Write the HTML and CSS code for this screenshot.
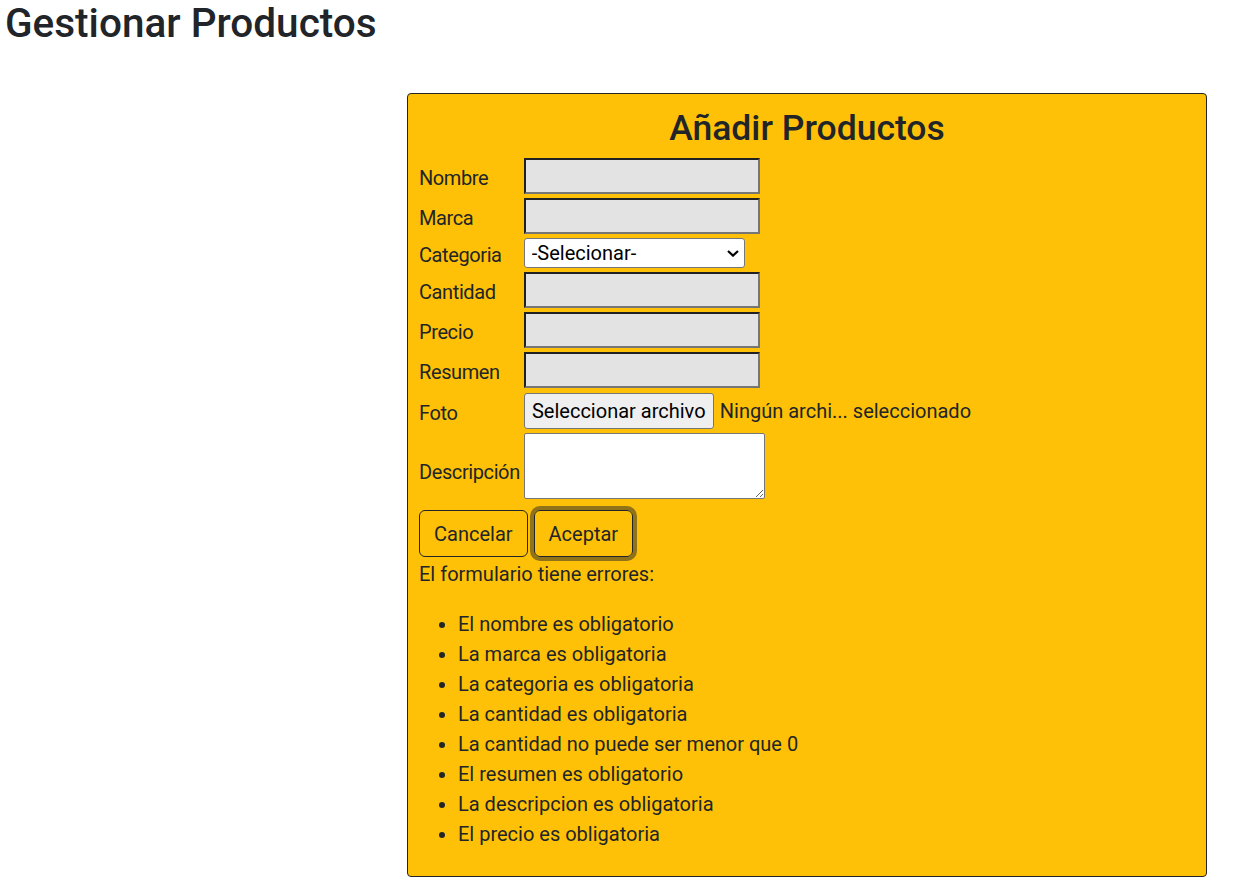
FILE: index.html
```html
<!DOCTYPE html>
<html lang="es">
<head>
<meta charset="utf-8">
<title>Gestionar Productos</title>
<link rel="stylesheet" href="styles.css">
</head>
<body>
<h1 class="page-title">Gestionar Productos</h1>
<div class="card">
  <h2 class="card-title">Añadir Productos</h2>
  <table class="form-table">
    <tr>
      <td class="lbl"><label for="nombre">Nombre</label></td>
      <td><input class="field" id="nombre" type="text"></td>
    </tr>
    <tr>
      <td class="lbl"><label for="marca">Marca</label></td>
      <td><input class="field" id="marca" type="text"></td>
    </tr>
    <tr>
      <td class="lbl"><label for="categoria">Categoria</label></td>
      <td>
        <span class="select-wrap">
          <select class="select" id="categoria">
            <option>-Selecionar-</option>
          </select>
          <svg class="chevron" width="12" height="7" viewBox="0 0 12 7" aria-hidden="true"><path d="M1 1l5 4.6L11 1" fill="none" stroke="#000" stroke-width="2.2"/></svg>
        </span>
      </td>
    </tr>
    <tr>
      <td class="lbl"><label for="cantidad">Cantidad</label></td>
      <td><input class="field" id="cantidad" type="text"></td>
    </tr>
    <tr>
      <td class="lbl"><label for="precio">Precio</label></td>
      <td><input class="field" id="precio" type="text"></td>
    </tr>
    <tr>
      <td class="lbl"><label for="resumen">Resumen</label></td>
      <td><input class="field" id="resumen" type="text"></td>
    </tr>
    <tr>
      <td class="lbl"><label>Foto</label></td>
      <td>
        <div class="file-input">
          <button type="button" class="file-btn">Seleccionar archivo</button>
          <span class="file-name">Ningún archi... seleccionado</span>
        </div>
      </td>
    </tr>
    <tr>
      <td class="lbl"><label for="descripcion">Descripción</label></td>
      <td><textarea class="textarea" id="descripcion"></textarea></td>
    </tr>
  </table>
  <div class="actions">
    <button type="button" class="btn">Cancelar</button>
    <button type="button" class="btn btn-focus">Aceptar</button>
  </div>
  <p class="errors-title">El formulario tiene errores:</p>
  <ul class="errors">
    <li>El nombre es obligatorio</li>
    <li>La marca es obligatoria</li>
    <li>La categoria es obligatoria</li>
    <li>La cantidad es obligatoria</li>
    <li>La cantidad no puede ser menor que 0</li>
    <li>El resumen es obligatorio</li>
    <li>La descripcion es obligatoria</li>
    <li>El precio es obligatoria</li>
  </ul>
</div>
</body>
</html>
```

FILE: styles.css
```css
* {
  box-sizing: border-box;
}

body {
  margin: 0;
  font-family: Roboto, "Liberation Sans", sans-serif;
  color: #212529;
  background: #fff;
}

.page-title {
  margin: 0 0 47px;
  padding-left: 5px;
  font-size: 40.5px;
  font-weight: 500;
  line-height: 46px;
}

.card {
  margin-left: 407px;
  width: 800px;
  background: #ffc107;
  border: 1px solid #212529;
  border-radius: 4px;
  padding: 12.5px 8px 7px;
  font-size: 20px;
  line-height: 1.5;
}

.card-title {
  margin: 0 0 6px;
  text-align: center;
  font-size: 35.5px;
  font-weight: 500;
  line-height: 1.2;
}

.form-table {
  border-collapse: separate;
  border-spacing: 2px;
}

.form-table td {
  padding: 1px;
  vertical-align: middle;
}

.form-table td.lbl {
  width: 101px;
  white-space: nowrap;
  letter-spacing: -0.4px;
}

.form-table td.lbl label {
  display: block;
  padding-top: 4px;
  line-height: 26px;
}

.field {
  display: block;
  width: 236px;
  height: 36px;
  margin: 0;
  border: 2px inset #767676;
  background: #e3e3e3;
  font: inherit;
}

.select-wrap {
  position: relative;
  display: block;
  width: 221px;
}

.select {
  display: block;
  width: 221px;
  height: 30px;
  margin: 0;
  padding: 0 24px 0 7px;
  appearance: none;
  -webkit-appearance: none;
  background: #fff;
  border: 1px solid #767676;
  border-radius: 3px;
  color: #000;
  font-family: inherit;
  font-size: 20px;
  line-height: 28px;
}

.chevron {
  position: absolute;
  left: 203px;
  top: 12px;
  pointer-events: none;
}

.file-input {
  display: flex;
  align-items: center;
  height: 37px;
}

.file-btn {
  width: 190px;
  height: 36px;
  margin: 0;
  padding: 0;
  background: #efefef;
  border: 1px solid #767676;
  border-radius: 3px;
  color: #000;
  font-family: inherit;
  font-size: 20px;
  line-height: 1;
  text-align: center;
}

.file-name {
  margin-left: 6px;
  white-space: nowrap;
}

.textarea {
  display: block;
  width: 241px;
  height: 66px;
  margin: 0 0 7px;
  padding: 2px;
  background: #fff;
  border: 1px solid #767676;
  border-radius: 2px;
  font-family: inherit;
  font-size: 16px;
}

.actions {
  display: flex;
  gap: 6px;
  margin-top: 1px;
  padding-left: 3px;
}

.btn {
  margin: 0;
  padding: 7.5px 14px;
  background: transparent;
  border: 1px solid #212529;
  border-radius: 6px;
  color: #212529;
  font-family: inherit;
  font-size: 20px;
  line-height: 30px;
}

.btn-focus {
  box-shadow: 0 0 0 4px rgba(33, 37, 41, 0.5);
}

.errors-title {
  margin: 2px 0 20px;
  padding-left: 3px;
}

.errors {
  margin: 0 0 20px;
  padding-left: 42px;
}
```
